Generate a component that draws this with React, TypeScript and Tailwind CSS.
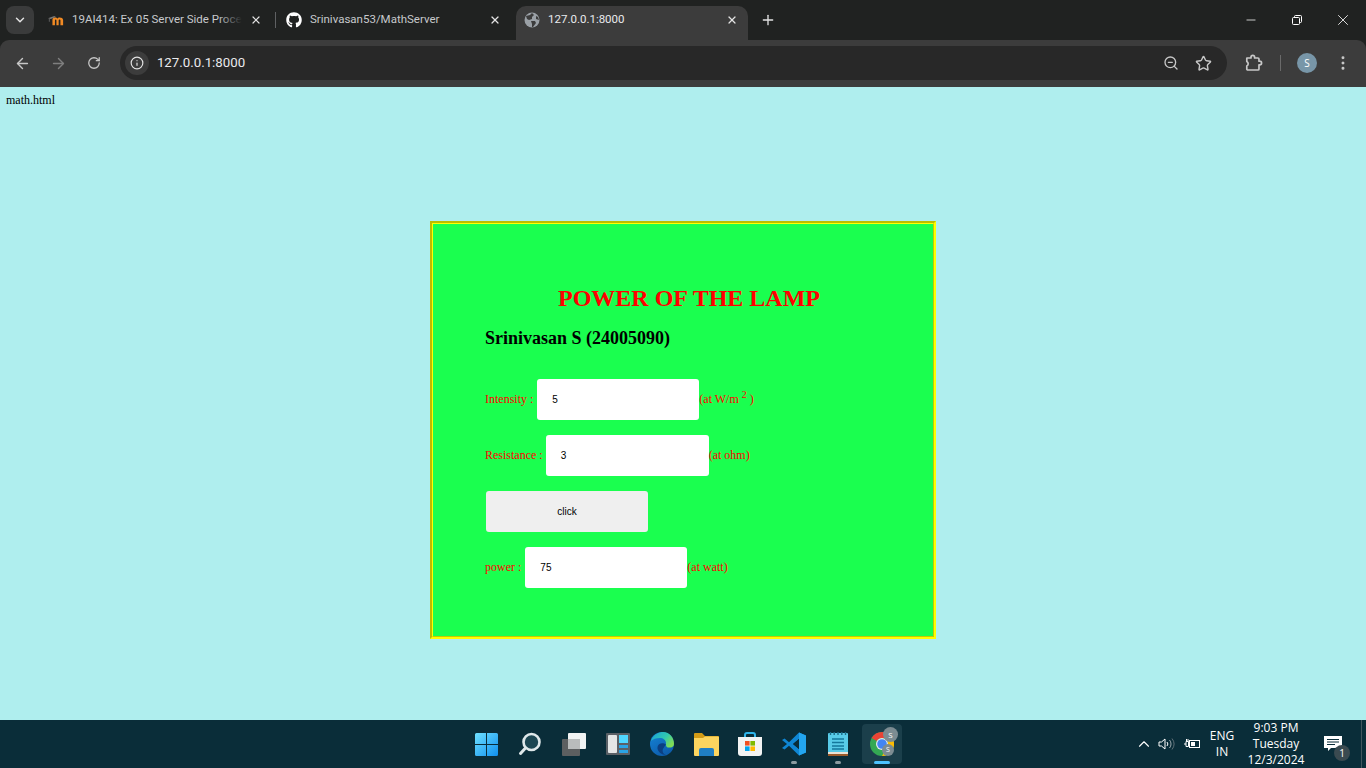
import { ArrowLeft, ArrowRight, ChevronDown, ChevronUp, EllipsisVertical, Info, Plus, RotateCw, Star, X, ZoomOut, Minus } from 'lucide-react'
import { FaGithub } from 'react-icons/fa'

const uiFont = "font-['Open_Sans','Noto_Sans',sans-serif]"

function MoodleIcon() {
  return (
    <svg width="18" height="12" viewBox="0 0 18 12">
      <path d="M0 4 L7 1.5 L9 2.5 L3 5 Z" fill="#777" />
      <path d="M1.5 4.5 V8" stroke="#777" strokeWidth="0.8" />
      <path d="M5 12 V5.5 C5 2.5 10 2.5 10.5 4.5 C11 2.5 17 2.5 17 6 V12 H14 V6.5 C14 5 12 5 12 6.5 V12 H9.5 V6.5 C9.5 5 7.8 5 7.8 6.5 V12 Z" fill="#f08a24" />
    </svg>
  )
}

function GlobeIcon() {
  return (
    <svg width="16" height="16" viewBox="0 0 16 16">
      <circle cx="8" cy="8" r="7.5" fill="#9aa0a6" />
      <path d="M2 4 L6 3 L8 1 L10 3 L8 5 L8 7 L5 8 L3 7 Z M7 9 L11 9 L12 11 L9 15 L8 15 L8 12 Z M12 4 L14 5 L15 8 L12 7 Z" fill="#3c3c3c" />
    </svg>
  )
}

function PuzzleIcon() {
  return (
    <svg className="ml-[18px]" width="18" height="18" viewBox="0 0 18 18" fill="none" stroke="#c7c7c7" strokeWidth="1.7" strokeLinejoin="round">
      <path d="M2 4 H6 V3.2 A1.8 1.8 0 0 1 9.6 3.2 V4 H13 A1 1 0 0 1 14 5 V7.2 H14.8 A1.8 1.8 0 0 1 14.8 10.8 H14 V15 A1 1 0 0 1 13 16 H2.8 A1 1 0 0 1 1.8 15 V12 A2.6 2.6 0 0 0 1.8 7.4 V4.2 Z" />
    </svg>
  )
}

function Tab({ title, icon, active, fade, close }: { title: string; icon: React.ReactNode; active?: boolean; fade?: boolean; close: string }) {
  return (
    <div className={`relative flex h-[34px] shrink-0 items-center pb-[6px] font-['Roboto',sans-serif] ${active ? 'w-[232px] rounded-t-[10px] bg-[#3c3c3c] pl-2' : 'w-[237px] pl-[10px]'}`}>
      <div className="flex w-[16px] shrink-0 items-center justify-center">{icon}</div>
      <div className={`relative ml-2 mr-[8px] min-w-0 flex-1 overflow-hidden whitespace-nowrap text-[11.5px] ${active ? 'text-[#e8eaed]' : 'text-[#c7c9cc]'}`}>
        {title}
        {fade && <div className="absolute inset-y-0 right-0 w-6 bg-gradient-to-r from-transparent to-[#202221]" />}
      </div>
      <X className={`${close} shrink-0 text-[#e3e3e3]`} size={12} strokeWidth={2.4} />
    </div>
  )
}

function WindowsIcon() {
  return (
    <svg width="23" height="23" viewBox="0 0 23 23">
      <defs>
        <linearGradient id="winA" x1="0" y1="0" x2="1" y2="1">
          <stop offset="0" stopColor="#6fe0ff" />
          <stop offset="1" stopColor="#0f8fee" />
        </linearGradient>
      </defs>
      <path d="M1.5 0 H11 V11 H0 V1.5 A1.5 1.5 0 0 1 1.5 0 Z M12 0 H21.5 A1.5 1.5 0 0 1 23 1.5 V11 H12 Z M0 12 H11 V23 H1.5 A1.5 1.5 0 0 1 0 21.5 Z M12 12 H23 V21.5 A1.5 1.5 0 0 1 21.5 23 H12 Z" fill="url(#winA)" />
    </svg>
  )
}

function SearchIcon() {
  return (
    <svg width="24" height="24" viewBox="0 0 24 24">
      <circle cx="13.5" cy="10" r="8" fill="#1c4652" stroke="#dfe8ea" strokeWidth="2.6" />
      <path d="M7.5 16 L2.5 21.5" stroke="#dfe8ea" strokeWidth="3" strokeLinecap="round" />
    </svg>
  )
}

function TaskViewIcon() {
  return (
    <svg width="25" height="23" viewBox="0 0 25 23">
      <rect x="0" y="6" width="18" height="17" rx="1" fill="#5c5f60" />
      <rect x="6" y="0" width="18" height="16" rx="1" fill="#f1f3f3" />
      <rect x="6" y="6" width="12" height="10" fill="#b9bcbc" />
    </svg>
  )
}

function WidgetsIcon() {
  return (
    <svg width="24" height="22" viewBox="0 0 24 22">
      <rect width="24" height="22" rx="1" fill="#5a6066" />
      <rect x="2" y="2" width="9" height="18" rx="1" fill="#e4e6e6" />
      <rect x="13" y="2" width="9" height="8" fill="#50d7ff" />
      <rect x="13" y="12" width="9" height="3" fill="#2ba3e4" />
      <rect x="13" y="17" width="9" height="3" fill="#2ba3e4" />
    </svg>
  )
}

function EdgeIcon() {
  return (
    <svg width="24" height="24" viewBox="0 0 24 24">
      <defs>
        <linearGradient id="edgeA" x1="0" y1="0" x2="1" y2="0.6">
          <stop offset="0" stopColor="#1aa0d8" />
          <stop offset="0.6" stopColor="#30c8b0" />
          <stop offset="1" stopColor="#7fdc55" />
        </linearGradient>
        <linearGradient id="edgeB" x1="0" y1="0" x2="0.6" y2="1">
          <stop offset="0" stopColor="#1585d8" />
          <stop offset="1" stopColor="#0d5cab" />
        </linearGradient>
      </defs>
      <circle cx="12" cy="12" r="12" fill="url(#edgeB)" />
      <path d="M1 9 C3 2 10 0 13 0 C20 0 24 6 24 12 C24 15 21 16 18 15.5 C15.5 15 16 12 16 11 C16 8 13 6 10 6 C6 6 3 7 1 9 Z" fill="url(#edgeA)" />
      <path d="M16 12.5 C13 10 8 11 7.5 15 C7 19 11 23 16 23 C13 22 12 19 13 17 C14 15 15 14 16 12.5 Z" fill="#0b3f82" />
    </svg>
  )
}

function FolderIcon() {
  return (
    <svg width="25" height="23" viewBox="0 0 25 23">
      <path d="M1 0 H8 L11 3 H24 A1 1 0 0 1 25 4 V8 H0 V1 A1 1 0 0 1 1 0 Z" fill="#d39b16" />
      <path d="M0 5 H9 L11 3.5 H24 A1 1 0 0 1 25 4.5 V22 A1 1 0 0 1 24 23 H1 A1 1 0 0 1 0 22 Z" fill="#fcd55f" />
      <path d="M5 17 A2 2 0 0 1 7 15 H18 A2 2 0 0 1 20 17 V23 H5 Z" fill="#1f7fc4" />
    </svg>
  )
}

function StoreIcon() {
  return (
    <svg width="24" height="24" viewBox="0 0 24 24">
      <path d="M7 6 V3 A2 2 0 0 1 9 1 H15 A2 2 0 0 1 17 3 V6" fill="none" stroke="#2fb5ec" strokeWidth="2" />
      <path d="M0 5 H24 V21 A3 3 0 0 1 21 24 H3 A3 3 0 0 1 0 21 Z" fill="#f2f3f3" />
      <rect x="7" y="9" width="4.6" height="4.6" fill="#f25022" />
      <rect x="12.4" y="9" width="4.6" height="4.6" fill="#7fba00" />
      <rect x="7" y="14.4" width="4.6" height="4.6" fill="#00a4ef" />
      <rect x="12.4" y="14.4" width="4.6" height="4.6" fill="#ffb900" />
    </svg>
  )
}

function VsCodeIcon() {
  return (
    <svg width="24" height="24" viewBox="0 0 24 24">
      <path d="M17 0.5 L24 3.5 V20.5 L17 23.5 L7 13.8 L2.6 17.6 L0 16 L5 12 L0 8 L2.6 6.4 L7 10.2 Z M17 7 L11 12 L17 17 Z" fill="#0f86d4" />
      <path d="M17 0.5 L24 3.5 V20.5 L17 23.5 Z M17 7 V17 L17 17 Z" fill="#23a5ef" fillRule="evenodd" />
      <path d="M17 7 L11 12 L17 17 Z" fill="#0a2d39" />
    </svg>
  )
}

function NotepadIcon() {
  return (
    <svg width="20" height="24" viewBox="0 0 20 24">
      <rect y="1" width="20" height="23" rx="1" fill="#58cbe8" />
      <rect y="20" width="20" height="2" fill="#e8e2d5" />
      <rect y="22" width="20" height="2" fill="#9a5a2a" />
      <path d="M2.5 0 V3 M6.2 0 V3 M10 0 V3 M13.8 0 V3 M17.5 0 V3" stroke="#1d6d8a" strokeWidth="1.4" />
      <path d="M4 7 H16 M4 10.5 H16 M4 14 H16 M4 17 H16" stroke="#14789c" strokeWidth="1.6" />
    </svg>
  )
}

function ChromeIcon() {
  return (
    <svg width="24" height="24" viewBox="0 0 24 24">
      <circle cx="12" cy="12" r="12" fill="#34a853" />
      <path d="M12 0 A12 12 0 0 1 22.4 6 L12 6 A6 6 0 0 0 6.8 9 L1.6 6 A12 12 0 0 1 12 0 Z" fill="#ea4335" />
      <path d="M22.4 6 A12 12 0 0 1 12 24 L17.2 15 A6 6 0 0 0 16.5 8 Z" fill="#fbbc04" />
      <circle cx="12" cy="12" r="6" fill="#e8eaed" />
      <circle cx="12" cy="12" r="4.8" fill="#4285f4" />
    </svg>
  )
}

function TaskItem({ children, dot }: { children: React.ReactNode; dot?: boolean }) {
  return (
    <div className="relative flex h-[40px] w-[40px] items-center justify-center">
      {children}
      {dot && <div className="absolute bottom-0 left-1/2 h-[3px] w-[6px] -translate-x-1/2 rounded-full bg-[#8b9aa0]" />}
    </div>
  )
}

function TrayIcons() {
  return (
    <div className="flex items-center">
      <ChevronUp className="text-white" size={18} strokeWidth={1.5} />
      <svg className="ml-[5px]" width="17" height="14" viewBox="0 0 17 14" fill="none" stroke="#fff" strokeWidth="1">
        <path d="M1 5 H3.5 L7 2 V12 L3.5 9 H1 Z" />
        <path d="M9 5 A3 3 0 0 1 9 9" />
        <path d="M11.5 3 A6 6 0 0 1 11.5 11" stroke="#9aa8ad" />
        <path d="M14 1.5 A9 9 0 0 1 14 12.5" stroke="#5f7077" />
      </svg>
      <svg className="ml-[9px]" width="17" height="12" viewBox="0 0 17 12" fill="none" stroke="#fff" strokeWidth="1">
        <rect x="5.5" y="2.5" width="10" height="7" />
        <rect x="7" y="4" width="4" height="4" fill="#fff" stroke="none" />
        <path d="M0 6 H2 M2 3.5 H4.5 V8.5 H2 Z M2.5 1 V3.5 M4 1 V3.5" />
      </svg>
    </div>
  )
}

export default function App() {
  return (
    <div className="flex h-screen w-full flex-col overflow-hidden bg-[#afeeee]">
      {/* browser chrome */}
      <div className={`bg-[#202221] ${uiFont}`}>
        <div className="flex h-[40px] items-end">
          <div className="mb-[6px] ml-[6px] flex h-[28px] w-[28px] items-center justify-center rounded-lg bg-[#3a3b3b]">
            <ChevronDown className="text-[#e3e3e3]" size={14} strokeWidth={2.5} />
          </div>
          <div className="ml-[4px] flex items-end">
            <Tab title="19AI414: Ex 05 Server Side Processing" icon={<MoodleIcon />} fade close="mr-[13px]" />
            <div className="mb-[12px] h-[16px] w-px bg-[#5f6163]" />
            <Tab title="Srinivasan53/MathServer" icon={<FaGithub className="text-white" size={16} />} close="mr-[12px]" />
          </div>
          <div className="ml-[3px]">
            <Tab title="127.0.0.1:8000" icon={<GlobeIcon />} active close="mr-[10px]" />
          </div>
          <Plus className="mb-[12px] ml-[12px] text-[#e3e3e3]" size={16} strokeWidth={2} />
          <div className="mb-[11px] ml-auto flex items-center text-white">
            <Minus className="mr-[34px]" size={14} strokeWidth={1.3} />
            <svg className="mr-[32px]" width="10" height="10" viewBox="0 0 10 10" fill="none" stroke="#fff" strokeWidth="1">
              <rect x="0.5" y="2.5" width="7" height="7" rx="1" />
              <path d="M2.5 2.5 V1.5 A1 1 0 0 1 3.5 0.5 H8.5 A1 1 0 0 1 9.5 1.5 V6.5 A1 1 0 0 1 8.5 7.5 H7.5" />
            </svg>
            <X className="mr-[14px]" size={18} strokeWidth={1.1} />
          </div>
        </div>
        <div className="flex h-[47px] items-center rounded-t-[9px] bg-[#3c3c3c] pb-px pl-[14px] pr-[14px]">
          <ArrowLeft className="text-[#c7c7c7]" size={17} strokeWidth={2} />
          <ArrowRight className="ml-[19px] text-[#7f7f7f]" size={17} strokeWidth={2} />
          <RotateCw className="ml-[20px] text-[#c7c7c7]" size={14} strokeWidth={2.2} />
          <div className="ml-[19px] flex h-[34px] w-[1109px] items-center rounded-full bg-[#282828]">
            <div className="ml-[5px] flex h-[24px] w-[24px] items-center justify-center rounded-full bg-[#3c3c3c]">
              <Info className="text-[#e3e3e3]" size={14} strokeWidth={2} />
            </div>
            <span className="ml-[8px] font-['Roboto',sans-serif] text-[13.25px] text-[#e8eaed]">127.0.0.1:8000</span>
            <ZoomOut className="ml-auto text-[#c7c7c7]" size={16} strokeWidth={2} />
            <Star className="ml-[16px] mr-[15px] text-[#c7c7c7]" size={17} strokeWidth={2} />
          </div>
          <PuzzleIcon />
          <div className="ml-[17px] h-[16px] w-px bg-[#6a6a6a]" />
          <div className="ml-[16px] flex h-[20px] w-[20px] items-center justify-center rounded-full bg-[#7896a8] text-[10px] text-white">S</div>
          <EllipsisVertical className="ml-[17px] text-[#c7c7c7]" size={18} strokeWidth={2} />
        </div>
      </div>

      {/* page */}
      <div className="min-h-0 flex-1 font-['Liberation_Serif',serif] text-[12px] text-black">
        <div className="pl-[6px] pt-[6px] leading-[14px]">math.html</div>
        <div className="ml-[430px] mt-[114px] h-[418px] w-[506px] border-2 border-b-[#ffff00] border-l-[#bcbc00] border-r-[#ffff00] border-t-[#bcbc00]">
          <div className="h-full border border-b-[#c8c800] border-l-[#ffff00] border-r-[#c8c800] border-t-[#ffff00] bg-[#1aff4f] pl-[52px]">
            <h1 className="ml-[73px] mt-[60px] text-[24px] font-bold leading-[28px] text-[#ff0000]">POWER OF THE LAMP</h1>
            <h2 className="mt-[16px] text-[18px] font-bold leading-[21px]">Srinivasan S (24005090)</h2>
            <div className="mt-[30px] flex flex-col gap-[15px] text-[#ff0000]">
              <div className="flex h-[41px] items-center">
                <span className="mr-[4px] pb-[2px]">Intensity :</span>
                <div className="flex h-[41px] w-[162px] items-center rounded-[3px] bg-white pl-[15px] font-['Liberation_Sans',sans-serif] text-[10px] text-black">5</div>
                <span className="pb-[2px]">(at W/m <sup className="text-[10px]">2</sup> )</span>
              </div>
              <div className="flex h-[41px] items-center">
                <span className="mr-[3px] pb-[2px]">Resistance :</span>
                <div className="flex h-[41px] w-[163px] items-center rounded-[3px] bg-white pl-[15px] font-['Liberation_Sans',sans-serif] text-[10px] text-black">3</div>
                <span className="pb-[2px]">(at ohm)</span>
              </div>
              <div className="ml-px flex h-[41px] w-[162px] items-center justify-center rounded-[3px] bg-[#efefef] font-['Liberation_Sans',sans-serif] text-[10px] text-black">click</div>
              <div className="flex h-[41px] items-center">
                <span className="mr-[4px] pb-[2px]">power :</span>
                <div className="flex h-[41px] w-[162px] items-center rounded-[3px] bg-white pl-[15px] font-['Liberation_Sans',sans-serif] text-[10px] text-black">75</div>
                <span className="pb-[2px]">(at watt)</span>
              </div>
            </div>
          </div>
        </div>
      </div>

      {/* taskbar */}
      <div className={`relative flex h-[48px] shrink-0 items-center bg-[#0a2d39] ${uiFont}`}>
        <div className="ml-[466px] flex items-center gap-[4px]">
          <TaskItem><WindowsIcon /></TaskItem>
          <TaskItem><SearchIcon /></TaskItem>
          <TaskItem><TaskViewIcon /></TaskItem>
          <TaskItem><WidgetsIcon /></TaskItem>
          <TaskItem><EdgeIcon /></TaskItem>
          <TaskItem><FolderIcon /></TaskItem>
          <TaskItem><StoreIcon /></TaskItem>
          <TaskItem dot><VsCodeIcon /></TaskItem>
          <TaskItem dot><NotepadIcon /></TaskItem>
          <div className="relative flex h-[40px] w-[40px] items-center justify-center rounded-[4px] bg-[#1b3f4b]">
            <ChromeIcon />
            <div className="absolute right-[4px] top-[3px] flex h-[15px] w-[15px] items-center justify-center rounded-full bg-[#7c8c92] text-[8px] text-white">S</div>
            <div className="absolute right-[8px] top-[20px] flex h-[12px] w-[12px] items-center justify-center rounded-full bg-[#7c8c92] text-[7px] text-white">S</div>
            <div className="absolute bottom-0 left-1/2 h-[3px] w-[16px] -translate-x-1/2 rounded-full bg-[#4cc2ff]" />
          </div>
        </div>
        <div className="ml-auto flex items-center pr-[4px] text-white">
          <TrayIcons />
          <div className="ml-[5px] w-[32px] text-center text-[12px] leading-[16px]">ENG<br />IN</div>
          <div className="w-[76px] text-center text-[12px] leading-[16px]">9:03 PM<br />Tuesday<br />12/3/2024</div>
          <div className="relative ml-[7px] mr-[16px] flex h-[24px] w-[24px] items-center justify-center">
            <svg width="18" height="16" viewBox="0 0 18 16">
              <path d="M0 0 H18 V12 H7 L4 15 V12 H0 Z" fill="#fff" />
              <path d="M3 3.5 H15 M3 6 H15 M3 8.5 H11" stroke="#0a2d39" />
            </svg>
            <div className="absolute bottom-[-5px] right-[-5px] flex h-[16px] w-[16px] items-center justify-center rounded-full bg-[#3a4a50] text-[10px] text-white">1</div>
          </div>
          <div className="h-[48px] w-px bg-[#41565e]" />
        </div>
      </div>
    </div>
  )
}
